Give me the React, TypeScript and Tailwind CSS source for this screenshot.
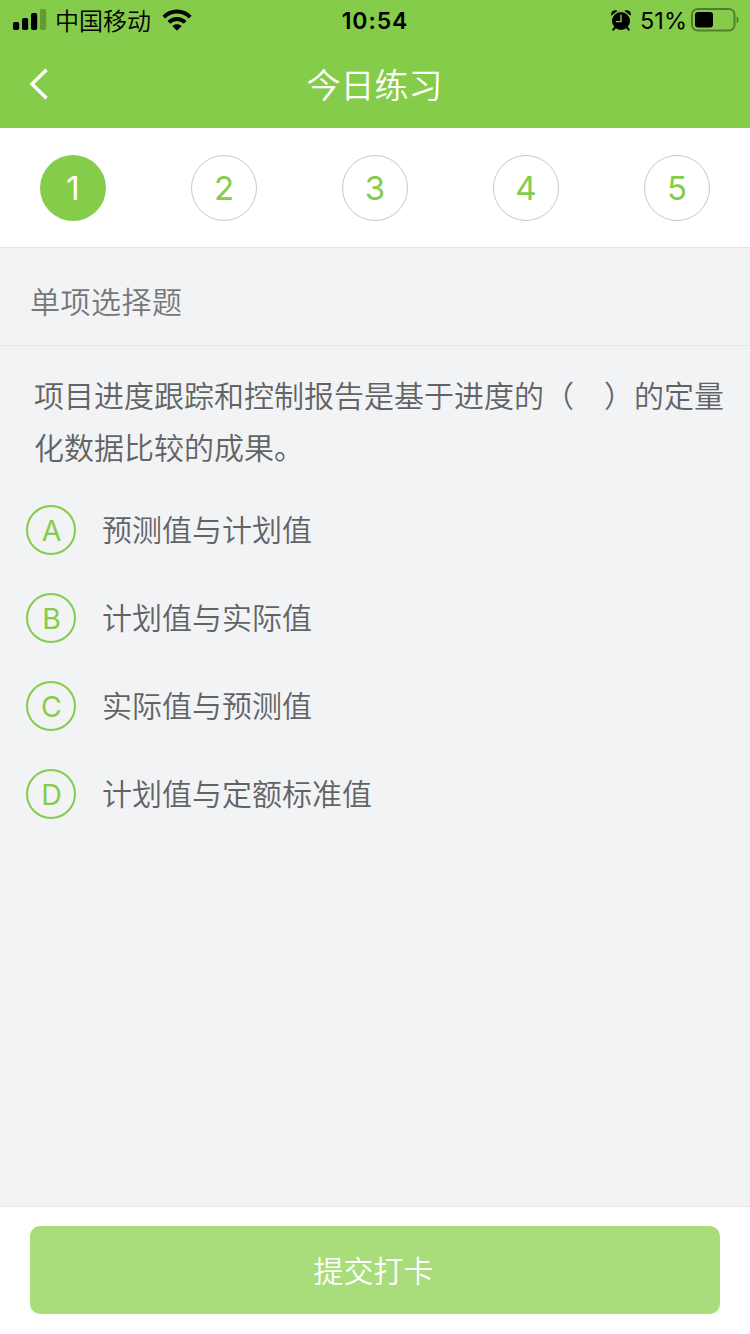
interface Option {
    key: string
    label: string
}

const steps = [1, 2, 3, 4, 5]

const options: Option[] = [
    { key: 'A', label: '预测值与计划值' },
    { key: 'B', label: '计划值与实际值' },
    { key: 'C', label: '实际值与预测值' },
    { key: 'D', label: '计划值与定额标准值' },
]

function SignalIcon() {
    return (
        <svg width="34" height="22" viewBox="0 0 34 22" className="shrink-0">
            <rect x="0" y="13" width="6.2" height="8" rx="1.8" />
            <rect x="9" y="9" width="6.2" height="12" rx="1.8" />
            <rect x="18" y="4" width="6.2" height="17" rx="1.8" />
            <rect x="27" y="0" width="6.2" height="21" rx="1.8" opacity="0.25" />
        </svg>
    )
}

function WifiIcon() {
    return (
        <svg width="30" height="22" viewBox="0 0 30 22" className="shrink-0">
            <g fill="none" stroke="#000" strokeWidth="4">
                <path d="M1.8 8.2C9.2 0.7 20.8 0.7 28.2 8.2" />
                <path d="M6.9 13.4C11.4 8.9 18.6 8.9 23.1 13.4" />
            </g>
            <path d="M10.3 17.1C12.9 14.6 17.1 14.6 19.7 17.1L15 21.8Z" />
        </svg>
    )
}

function AlarmIcon() {
    return (
        <svg width="20" height="21" viewBox="0 0 20 21" className="shrink-0">
            <circle cx="10" cy="11" r="9" />
            <path d="M0.8 4.6C0.6 2 2.8 0.4 5.4 1ZM19.2 4.6C19.4 2 17.2 0.4 14.6 1Z" stroke="#000" strokeWidth="1.2" />
            <path d="M4.5 17L2.3 19.7M15.5 17L17.7 19.7" stroke="#000" strokeWidth="2" strokeLinecap="round" />
            <path d="M10 5.3V11.6H5.3" fill="none" stroke="#86cc4b" strokeWidth="1.4" strokeLinecap="round" />
        </svg>
    )
}

function BatteryIcon() {
    return (
        <svg width="48" height="24" viewBox="0 0 48 24" className="shrink-0">
            <rect x="1" y="1" width="42.5" height="21.5" rx="5.5" fill="none" stroke="#000" strokeOpacity="0.38" strokeWidth="2" />
            <rect x="4" y="4" width="18" height="15.5" rx="3" />
            <path d="M45.6 8.2C48.3 9.8 48.3 13.8 45.6 15.4Z" opacity="0.42" />
        </svg>
    )
}

function StatusBar() {
    return (
        <div className="grid h-10 grid-cols-3 items-center text-black">
            <div className="flex items-center pl-[13px]">
                <SignalIcon />
                <span className="ml-2 pt-[3px] text-[24px] leading-[37px] font-[350]">中国移动</span>
                <span className="ml-[11px]">
                    <WifiIcon />
                </span>
            </div>
            <div className="pt-0.5 text-center text-[23px] leading-[38px] font-semibold tracking-[0.9px]">10:54</div>
            <div className="flex items-center justify-end pr-[11px]">
                <AlarmIcon />
                <span className="mr-1 ml-[9px] pt-0.5 text-[23.5px] leading-[38px]">51%</span>
                <BatteryIcon />
            </div>
        </div>
    )
}

export default function App() {
    return (
        <div className="flex h-[1334px] w-[750px] flex-col overflow-hidden bg-[#f2f3f5] font-[Inter,'Noto_Sans_CJK_SC',sans-serif]">
            <header className="h-32 bg-[#86cc4b]">
                <StatusBar />
                <div className="grid h-[88px] grid-cols-3 items-center text-white">
                    <button className="pl-[29px]">
                        <svg width="20" height="32" viewBox="0 0 20 32" fill="none" stroke="currentColor" strokeWidth="3.4">
                            <path d="M17.5 1.8L3 16L17.5 30.2" />
                        </svg>
                    </button>
                    <h1 className="pt-[3px] pr-px text-center text-[34px] leading-[85px] font-[350]">今日练习</h1>
                </div>
            </header>

            <nav className="flex h-[120px] items-center justify-between border-b border-[#e4e4e4] bg-white px-10">
                {steps.map((step) => (
                    <button
                        key={step}
                        className={
                            step === 1
                                ? 'h-[66px] w-[66px] rounded-full bg-[#86cc4b] pt-0.5 text-[33px] text-white'
                                : 'h-[66px] w-[66px] rounded-full border border-[#c8c8c8] pt-0.5 text-[33px] text-[#86cc4b]'
                        }
                    >
                        {step}
                    </button>
                ))}
            </nav>

            <h2 className="h-[98px] border-b border-[#e6e7e9] pl-[30px] text-[30px] leading-[109px] font-[350] tracking-[0.5px] text-[#777779]">
                单项选择题
            </h2>

            <main className="flex-1 pt-6">
                <p className="pl-[34px] text-[30px] leading-[52px] font-[350] whitespace-nowrap text-[#626365]">
                    项目进度跟踪和控制报告是基于进度的（{'\u3000'}）的定量
                    <br />
                    化数据比较的成果。
                </p>
                <ul className="mt-[31px] flex flex-col gap-[38px] pl-[26px]">
                    {options.map((option) => (
                        <li key={option.key} className="flex h-[50px] items-center gap-[26px]">
                            <span className="flex h-[50px] w-[50px] items-center justify-center rounded-full border-2 border-[#86cc4b] pt-0.5 pl-px text-[28.5px] text-[#86cc4b]">
                                {option.key}
                            </span>
                            <span className="text-[30px] leading-[50px] font-[350] text-[#626365]">{option.label}</span>
                        </li>
                    ))}
                </ul>
            </main>

            <footer className="h-32 border-t border-[#e6e7e9] bg-white px-[30px] pt-[19px]">
                <button className="h-[88px] w-full rounded-[10px] bg-[#a9dc7b] pt-0.5 pr-[3px] text-[30px] font-[350] text-white">提交打卡</button>
            </footer>
        </div>
    )
}
